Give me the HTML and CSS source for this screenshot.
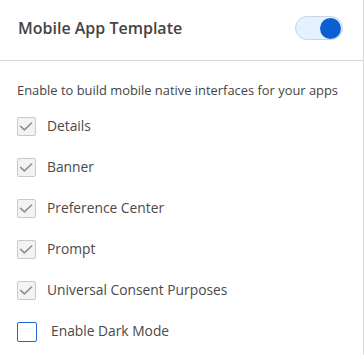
FILE: index.html
```html
<!DOCTYPE html>
<html lang="en">
<head>
<meta charset="utf-8">
<title>Mobile App Template</title>
<link rel="stylesheet" href="styles.css">
</head>
<body>
<div class="card">
  <div class="header">
    <h2 class="title">Mobile App Template</h2>
    <span class="toggle" role="switch" aria-checked="true"><span class="knob"></span></span>
  </div>
  <div class="body">
    <p class="desc">Enable to build mobile native interfaces for your apps</p>
    <ul class="list">
      <li class="item"><span class="cb cb-checked"><svg viewBox="0 0 19 19" width="19" height="19"><polyline points="3.6,9.3 7.4,12.8 14.6,6" /></svg></span><span class="label">Details</span></li>
      <li class="item"><span class="cb cb-checked"><svg viewBox="0 0 19 19" width="19" height="19"><polyline points="3.6,9.3 7.4,12.8 14.6,6" /></svg></span><span class="label">Banner</span></li>
      <li class="item"><span class="cb cb-checked"><svg viewBox="0 0 19 19" width="19" height="19"><polyline points="3.6,9.3 7.4,12.8 14.6,6" /></svg></span><span class="label">Preference Center</span></li>
      <li class="item"><span class="cb cb-checked"><svg viewBox="0 0 19 19" width="19" height="19"><polyline points="3.6,9.3 7.4,12.8 14.6,6" /></svg></span><span class="label">Prompt</span></li>
      <li class="item"><span class="cb cb-checked"><svg viewBox="0 0 19 19" width="19" height="19"><polyline points="3.6,9.3 7.4,12.8 14.6,6" /></svg></span><span class="label">Universal Consent Purposes</span></li>
      <li class="item"><span class="cb cb-empty"></span><span class="label label-empty">Enable Dark Mode</span></li>
    </ul>
  </div>
</div>
</body>
</html>
```
FILE: styles.css
```css
html, body {
  margin: 0;
  padding: 0;
  background: #ffffff;
}
body {
  font-family: "Open Sans", "Liberation Sans", sans-serif;
  color: #444444;
}
.card {
  width: 363px;
  height: 355px;
  border-right: 1px solid #d8d8d8;
  background: #ffffff;
}
.header {
  border-bottom: 1px solid #d8d8d8;
  display: flex;
  align-items: center;
  justify-content: space-between;
  padding: 0 20px 0 18px;
  box-sizing: border-box;
  height: 61px;
}
.title {
  margin: 0;
  font-size: 16px;
  font-weight: 600;
  color: #444444;
  line-height: 20px;
  margin-top: -4px;
}
.toggle {
  width: 48px;
  height: 24px;
  box-sizing: border-box;
  border: 1px solid #cfd6dc;
  border-radius: 12px;
  background: #e3f2fe;
  display: flex;
  align-items: center;
  justify-content: flex-end;
  padding-right: 1px;
  margin-top: -4px;
}
.knob {
  width: 21px;
  height: 21px;
  border-radius: 50%;
  background: #0b5fd3;
}
.body {
  padding: 20px 0 0 17px;
}
.desc {
  margin: 0;
  font-size: 12.9px;
  line-height: 18px;
  color: #444444;
}
.list {
  list-style: none;
  margin: 18px 0 0;
  padding: 0;
  display: flex;
  flex-direction: column;
  gap: 22px;
}
.item {
  display: flex;
  align-items: center;
  height: 19px;
}
.cb {
  width: 19px;
  height: 19px;
  box-sizing: border-box;
  border-radius: 2px;
  flex: none;
  position: relative;
}
.cb-checked {
  background: #f3f3f3;
  border: 1px solid #c9c9c9;
}
.cb-checked svg {
  position: absolute;
  left: -1px;
  top: -1px;
}
.cb-checked polyline {
  fill: none;
  stroke: #8f8f8f;
  stroke-width: 1.6;
  stroke-linecap: round;
  stroke-linejoin: round;
}
.cb-empty {
  width: 20px;
  height: 20px;
  background: #ffffff;
  border: 1.5px solid #1b68d3;
}
.label {
  font-size: 13.8px;
  line-height: 18px;
  color: #4a4a4a;
  margin-left: 11px;
  margin-top: -2px;
}
.label-empty {
  margin-left: 14px;
}
```
